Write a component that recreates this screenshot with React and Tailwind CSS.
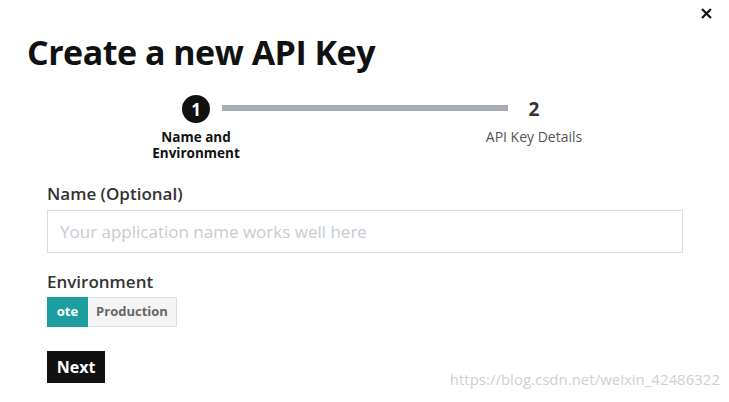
import React from "react";

export default function App() {
  return (
    <div
      className="relative w-[729px] h-[402px] bg-white overflow-hidden text-[#111]"
      style={{ fontFamily: '"Open Sans", "Noto Sans", sans-serif' }}
    >
      <button className="absolute left-[701px] top-[8px] w-[11px] h-[11px]" aria-label="Close">
        <svg width="11" height="11" viewBox="0 0 11 11">
          <path d="M1 1 L10 10 M10 1 L1 10" stroke="#111" strokeWidth="2.2" strokeLinecap="butt" />
        </svg>
      </button>
      <div className="pl-[27px] pt-[30px]">
        <h1 className="text-[34px] font-bold leading-[44px] tracking-[-0.5px]">Create a new API Key</h1>
      </div>
      {/* stepper */}
      <div className="mt-[21px] flex">
        <div className="ml-[146px] flex flex-col items-center w-[100px]">
          <div className="w-[28px] h-[28px] rounded-full bg-[#111] text-white flex items-center justify-center text-[17px] font-bold leading-none">1</div>
          <div className="mt-[6px] text-[13.5px] font-bold leading-[16px] text-center">Name and<br />Environment</div>
        </div>
        <div className="w-[286px] ml-[-24px] mt-[10px] h-[6px] bg-[#a7acb3]" />
        <div className="ml-[-34px] flex flex-col items-center w-[120px]">
          <div className="h-[28px] flex items-center text-[19px] font-bold text-[#333]">2</div>
          <div className="mt-[6px] text-[14px] leading-[16px] text-[#555]">API Key Details</div>
        </div>
      </div>
      <div className="px-[47px] mt-[22px]">
        <div className="text-[17px] font-semibold text-[#333] leading-[22px]">Name (Optional)</div>
        <input
          className="mt-[5px] w-[636px] h-[43px] border border-[#dcdcdc] px-[12px] text-[17px] outline-none placeholder:text-[#c7ccd1]"
          placeholder="Your application name works well here"
        />
        <div className="mt-[18px] text-[17px] font-semibold text-[#333] leading-[22px]">Environment</div>
        <div className="mt-[4px] flex h-[30px] w-fit">
          <div className="w-[41px] bg-[#1c9ea1] text-white text-[13px] font-bold flex items-center justify-center">ote</div>
          <div className="w-[89px] bg-[#f4f4f4] border border-[#dedede] border-l-0 text-[#666] text-[13px] font-bold flex items-center justify-center">Production</div>
        </div>
        <div className="mt-[24px] flex items-end justify-between">
          <button className="w-[58px] h-[32px] bg-[#111] text-white text-[16px] font-bold">Next</button>
          <div className="text-[15px] text-[#d0d0d0] mr-[-38px] mb-[-7px]">https://blog.csdn.net/weixin_42486322</div>
        </div>
      </div>
    </div>
  );
}
